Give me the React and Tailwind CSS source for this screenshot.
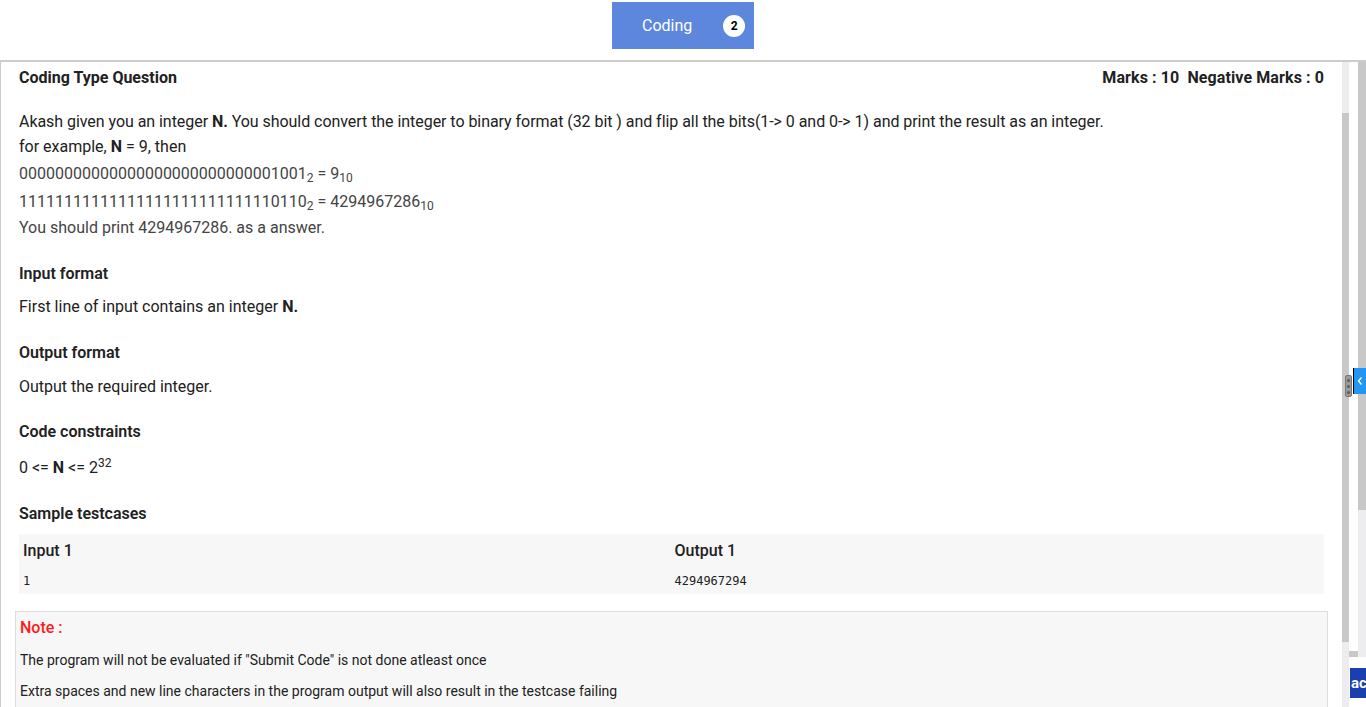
import React from "react";

export default function App() {
  const font = { fontFamily: "Roboto, 'Liberation Sans', sans-serif" };
  return (
    <div className="w-[1366px] h-[707px] overflow-hidden bg-white relative" style={font}>
      {/* header */}
      <div className="h-[60px] flex justify-center">
        <div className="mt-[2px] w-[142px] h-[47px] bg-[#5c87dc] flex items-center text-white">
          <span className="ml-[30px] text-[16px]">Coding</span>
          <span className="ml-[31px] w-[22px] h-[22px] rounded-full bg-white text-black text-[12px] font-bold flex items-center justify-center">2</span>
        </div>
      </div>
      <div className="h-[2px] bg-[#cccccc]" />

      <div className="flex h-[645px]">
        {/* main panel */}
        <div className="flex-1 border-l border-[#cccccc] pl-[18px] pr-[18px] text-[#212121] overflow-hidden">
          <div className="pt-[6px] h-[26px] flex justify-between items-center text-[16px] font-bold leading-[20px]">
            <span>Coding Type Question</span>
            <span className="tracking-[0.1px]">Marks : 10&nbsp; Negative Marks : 0</span>
          </div>

          <div className="mt-[21px] text-[16px]">
            <div className="h-[25px] leading-[25px] tracking-[-0.05px]">
              Akash given you an integer <b>N.</b> You should convert the integer to binary format (32 bit ) and flip all the bits(1-&gt; 0 and 0-&gt; 1) and print the result as an integer.
            </div>
            <div className="h-[25px] leading-[25px]">
              for example, <b>N</b> = 9, then
            </div>
            <div className="h-[29px] leading-[30px] text-[#444]">
              00000000000000000000000000001001<sub className="text-[12px] leading-none">2</sub> = 9<sub className="text-[12px] leading-none">10</sub>
            </div>
            <div className="h-[27px] leading-[27px] text-[#444]">
              11111111111111111111111111110110<sub className="text-[12px] leading-none">2</sub> = 4294967286<sub className="text-[12px] leading-none">10</sub>
            </div>
            <div className="h-[26px] leading-[26px] text-[#444]">You should print 4294967286. as a answer.</div>
          </div>

          <div className="mt-[23px] h-[20px] leading-[20px] text-[16px] font-semibold">Input format</div>
          <div className="mt-[10px] h-[26px] leading-[26px] text-[16px]">
            First line of input contains an integer <b>N.</b>
          </div>

          <div className="mt-[23px] h-[20px] leading-[20px] text-[16px] font-semibold">Output format</div>
          <div className="mt-[11px] h-[26px] leading-[26px] text-[16px]">Output the required integer.</div>

          <div className="mt-[22px] h-[20px] leading-[20px] text-[16px] font-semibold">Code constraints</div>
          <div className="mt-[13px] h-[26px] leading-[26px] text-[16px]">
            0 &lt;= <b>N</b> &lt;= 2<sup className="text-[12px] leading-none">32</sup>
          </div>

          <div className="mt-[23px] h-[20px] leading-[20px] text-[16px] font-semibold">Sample testcases</div>

          <div className="mt-[10px] bg-[#f7f7f7] grid grid-cols-2">
            <div className="pl-[4px] h-[31px] flex items-center text-[16px] font-medium pt-[2px]">Input 1</div>
            <div className="pl-[3px] h-[31px] flex items-center text-[16px] font-medium pt-[2px]">Output 1</div>
            <div className="pl-[4px] h-[29px] flex items-center text-[12px] pt-[2px]" style={{ fontFamily: "'DejaVu Sans Mono', monospace" }}>1</div>
            <div className="pl-[3px] h-[29px] flex items-center text-[12px] pt-[2px]" style={{ fontFamily: "'DejaVu Sans Mono', monospace" }}>4294967294</div>
          </div>

          <div className="mt-[17px] -mx-[4px] border border-[#dddddd] bg-[#f7f7f7] pl-[4px] pt-[6px] h-[120px]">
            <div className="h-[20px] leading-[20px] text-[16px] font-medium text-[#ff1a1a]">Note :</div>
            <div className="mt-[12px] h-[20px] leading-[20px] text-[14px]">The program will not be evaluated if "Submit Code" is not done atleast once</div>
            <div className="mt-[11px] h-[20px] leading-[20px] text-[14px]">Extra spaces and new line characters in the program output will also result in the testcase failing</div>
          </div>
        </div>

        {/* inner scrollbar */}
        <div className="w-[7px] flex flex-col">
          <div className="h-[51px] bg-[#ededf0]" />
          <div className="h-[529px] bg-[#c8c8c8]" />
          <div className="flex-1 bg-[#ededf0]" />
        </div>
        <div className="w-[9px] bg-white flex flex-col">
          <div className="h-[589px]" />
          <div className="h-[6px] bg-[#c8c8c8]" />
        </div>
        {/* outer scrollbar */}
        <div className="w-[8px] flex flex-col">
          <div className="h-[448px] bg-[#c8c8c8]" />
          <div className="h-[147px] bg-[#ededf0]" />
          <div className="flex-1 bg-white" />
        </div>
      </div>

      {/* splitter handle */}
      <div className="absolute left-[1345px] top-[375px] w-[7px] h-[22px] rounded-[2px] bg-[#9a9a9a] border border-[#777] flex flex-col items-center justify-center gap-[3px]">
        <span className="w-[3px] h-[3px] bg-[#5a5a5a] rounded-full" />
        <span className="w-[3px] h-[3px] bg-[#5a5a5a] rounded-full" />
        <span className="w-[3px] h-[3px] bg-[#5a5a5a] rounded-full" />
      </div>
      {/* blue side tab */}
      <div className="absolute left-[1353px] top-[368px] w-[13px] h-[26px] bg-[#2196f3] border-l border-black flex items-center justify-center">
        <svg width="8" height="10" viewBox="0 0 8 10" fill="none">
          <path d="M5.5 1.5 L2.5 5 L5.5 8.5" stroke="white" strokeWidth="1.4" />
        </svg>
      </div>
      {/* bottom right button */}
      <div className="absolute left-[1350px] top-[668px] w-[16px] h-[30px] bg-[#1a3fb0] overflow-hidden flex items-center">
        <span className="text-white text-[15px] font-bold pl-[1px] leading-none">ac</span>
      </div>
    </div>
  );
}
